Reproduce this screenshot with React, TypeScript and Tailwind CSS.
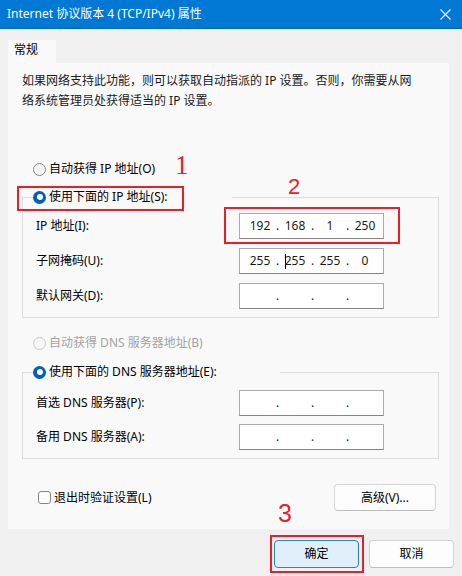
import React from 'react';
import clsx from 'clsx';

function Radio({ checked, disabled }: { checked?: boolean; disabled?: boolean }) {
  if (checked) {
    return (
      <span className="flex items-center justify-center w-[13px] h-[13px] rounded-full bg-[#005fb8] shrink-0">
        <span className="w-[6px] h-[6px] rounded-full bg-white" />
      </span>
    );
  }
  return (
    <span
      className={clsx(
        'w-[13px] h-[13px] rounded-full border shrink-0',
        disabled ? 'border-[#cacaca] bg-[#f6f6f6]' : 'border-[#8a8a8a] bg-[#f3f3f3]'
      )}
    />
  );
}

function RadioRow({ label, checked, disabled }: { label: string; checked?: boolean; disabled?: boolean }) {
  return (
    <div className={clsx('flex items-center h-[20px] gap-[3px]', disabled ? 'text-[#a3a3a3]' : 'text-black')}>
      <Radio checked={checked} disabled={disabled} />
      <span className="leading-[20px]">{label}</span>
    </div>
  );
}

function IpField({ parts, caret }: { parts?: string[]; caret?: number }) {
  const p = parts ?? ['', '', '', ''];
  return (
    <div className="flex items-center w-[145px] h-[26px] bg-white border border-[#ababab] border-b-[#858585] pl-[6px] text-[#1a1a1a] leading-[16px]">
      {p.map((v, i) => (
        <React.Fragment key={i}>
          {i > 0 && <span className="w-[7px] text-center">.</span>}
          <span className="w-[28px] text-center">
            {caret === i && <span className="inline-block w-px h-[15px] bg-black align-middle -mr-px" />}
            {v}
          </span>
        </React.Fragment>
      ))}
    </div>
  );
}

function FieldRow({ label, children }: { label: string; children: React.ReactNode }) {
  return (
    <div className="flex items-center justify-between h-[26px]">
      <span className="leading-[20px]">{label}</span>
      {children}
    </div>
  );
}

export default function App() {
  return (
    <div className="relative w-[462px] h-[576px] bg-[#f0f0f0] flex flex-col overflow-hidden text-[12px] text-black font-['Noto_Sans','Noto_Sans_CJK_SC',sans-serif]">
      {/* title bar */}
      <div className="flex items-center justify-between h-[29px] bg-[#0078d4] border-b border-[#0067b8] pl-[7px] pr-[11px] text-white">
        <span className="leading-[16px]">Internet 协议版本 4 (TCP/IPv4) 属性</span>
        <svg width="11" height="11" viewBox="0 0 11 11" fill="none" stroke="white" strokeWidth="1.1">
          <path d="M0.5 0.5L10.5 10.5M10.5 0.5L0.5 10.5" />
        </svg>
      </div>

      {/* tab */}
      <div className="ml-[8px] mt-[11px] w-[48px] h-[23px] bg-[#f9f9f9] pl-[6px] pt-[2px] leading-[16px]">常规</div>

      {/* panel */}
      <div className="ml-[8px] w-[441px] h-[466px] bg-[#f9f9f9] pl-[14px] pr-[10px] pt-[8px] flex flex-col">
        <p className="leading-[20px] text-[#1a1a1a]">
          如果网络支持此功能，则可以获取自动指派的 IP 设置。否则，你需要从网
          <br />
          络系统管理员处获得适当的 IP 设置。
        </p>

        <div className="mt-[48px] pl-[11px]">
          <RadioRow label="自动获得 IP 地址(O)" />
        </div>

        <fieldset className="mt-[8px] border border-[#dcdcdc] pl-[13px] pr-[54px] pt-[6px] pb-[8px] flex flex-col gap-[9px]">
          <legend className="-ml-[3px] w-[199px]">
            <RadioRow label="使用下面的 IP 地址(S):" checked />
          </legend>
          <FieldRow label="IP 地址(I):">
            <IpField parts={['192', '168', '1', '250']} />
          </FieldRow>
          <FieldRow label="子网掩码(U):">
            <IpField parts={['255', '255', '255', '0']} caret={1} />
          </FieldRow>
          <FieldRow label="默认网关(D):">
            <IpField />
          </FieldRow>
        </fieldset>

        <div className="mt-[15px] pl-[11px]">
          <RadioRow label="自动获得 DNS 服务器地址(B)" disabled />
        </div>

        <fieldset className="mt-[9px] border border-[#dcdcdc] pl-[13px] pr-[54px] pt-[8px] pb-[8px] flex flex-col gap-[8px]">
          <legend className="-ml-[3px] w-[247px]">
            <RadioRow label="使用下面的 DNS 服务器地址(E):" checked />
          </legend>
          <FieldRow label="首选 DNS 服务器(P):">
            <IpField />
          </FieldRow>
          <FieldRow label="备用 DNS 服务器(A):">
            <IpField />
          </FieldRow>
        </fieldset>

        <div className="mt-[25px] flex items-center justify-between pl-[16px] pr-[3px]">
          <label className="flex items-center gap-[3px]">
            <span className="w-[13px] h-[13px] rounded-[3px] border border-[#858585] bg-[#fbfbfb]" />
            <span className="leading-[20px]">退出时验证设置(L)</span>
          </label>
          <button className="w-[102px] h-[27px] rounded-[4px] bg-[#fdfdfd] border border-[#d6d6d6] border-b-[#bdbdbd] leading-[16px]">
            高级(V)...
          </button>
        </div>
      </div>

      {/* footer buttons */}
      <div className="mt-[11px] flex justify-end gap-[10px] pr-[8px]">
        <button className="w-[85px] h-[28px] rounded-[4px] bg-[#e0eef9] border border-[#2a84b8] leading-[16px]">确定</button>
        <button className="w-[85px] h-[28px] rounded-[4px] bg-[#fdfdfd] border border-[#d3d3d3] border-b-[#bcbcbc] leading-[16px]">取消</button>
      </div>

      {/* annotations */}
      <span className="absolute left-[175px] top-[150px] text-[27px] leading-[30px] text-[#e0242f] font-['Liberation_Serif',serif]">1</span>
      <div className="absolute left-[17px] top-[186px] w-[167px] h-[25px] border-2 border-[#e81e2b]" />
      <span className="absolute left-[288px] top-[174px] text-[22px] leading-[26px] text-[#e0242f] font-['Liberation_Sans',sans-serif]">2</span>
      <div className="absolute left-[224px] top-[207px] w-[176px] h-[37px] border-2 border-[#e81e2b]" />
      <span className="absolute left-[278px] top-[499px] text-[25px] leading-[28px] text-[#e0242f] font-['Liberation_Sans',sans-serif]">3</span>
      <div className="absolute left-[270px] top-[535px] w-[94px] h-[38px] border-2 border-[#e81e2b]" />
    </div>
  );
}
